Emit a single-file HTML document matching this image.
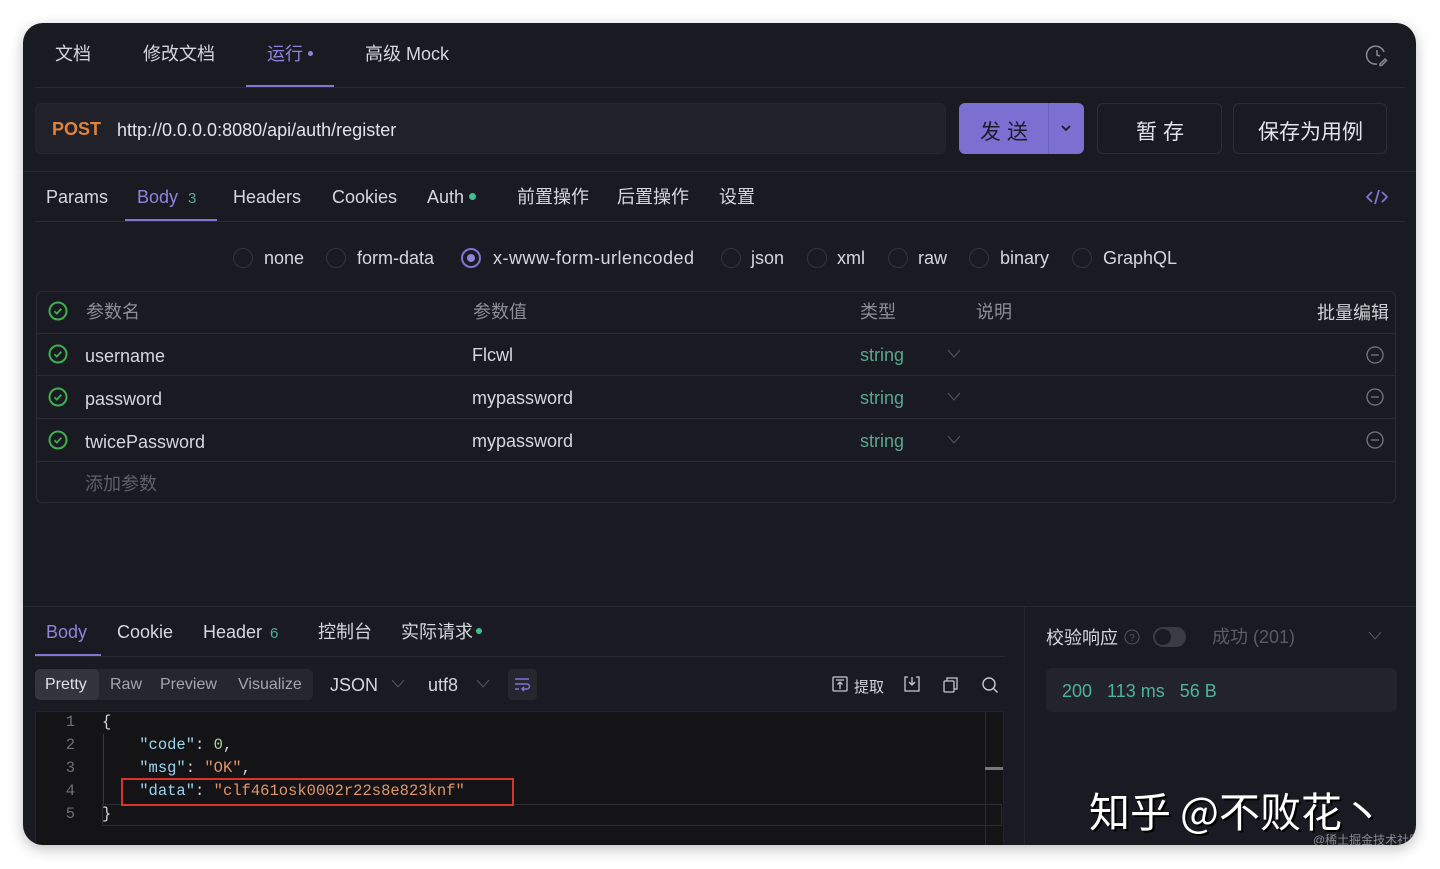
<!DOCTYPE html>
<html><head><meta charset="utf-8"><style>
*{margin:0;padding:0;box-sizing:border-box}
body{width:1440px;height:869px;background:#fff;position:relative;overflow:hidden;font-family:"Liberation Sans","Noto Sans CJK SC",sans-serif;color:#d6d7dc}
.win{position:absolute;left:23px;top:23px;width:1393px;height:822px;background:#1a1b22;border-radius:20px;box-shadow:0 4px 14px rgba(0,0,0,.25);overflow:hidden}
.a{position:absolute;white-space:nowrap}
.t{font-size:18px;line-height:22px}
.hl{position:absolute;height:1px;background:#2a2b33}
.pur{color:#8e84dc}
.dot{display:inline-block;width:6px;height:6px;border-radius:50%;margin-left:5px;vertical-align:middle;position:relative;top:-2px}
.radio{position:absolute;width:20px;height:20px;border:1.5px solid #33343c;border-radius:50%}
.mono{font-family:"Liberation Mono","DejaVu Sans Mono",monospace;font-size:15.5px;line-height:23px}
</style></head><body>
<div class="win">
<div class="a t" style="left:32px;top:20px">文档</div>
<div class="a t" style="left:120px;top:20px">修改文档</div>
<div class="a t pur" style="left:244px;top:20px">运行<span class="dot" style="background:#8e84dc;width:5px;height:5px"></span></div>
<div class="a t" style="left:342px;top:20px">高级 Mock</div>
<div class="a" style="left:223px;top:62px;width:88px;height:2px;background:#8078d0"></div>
<div class="hl" style="left:12px;top:64px;width:1370px"></div>
<svg class="a" style="left:1342px;top:20px" width="24" height="24" viewBox="0 0 24 24" fill="none" stroke="#8a8b93" stroke-width="1.5"><path d="M19 9A9 9 0 1 0 12 21"/><path d="M12 7v5l3 1"/><path d="M15 21l5-5 1.5 1.5-5 5H15z"/></svg>
<div class="a" style="left:12px;top:80px;width:911px;height:51px;background:#212229;border-radius:6px;border:1px solid #25262d"></div>
<div class="a t" style="left:29px;top:95px;color:#e0833d;font-weight:bold">POST</div>
<div class="a t" style="left:94px;top:96px;color:#e2e3e8">http://0.0.0.0:8080/api/auth/register</div>
<div class="a" style="left:936px;top:80px;width:125px;height:51px;background:#7b70d2;border-radius:6px"></div>
<div class="a" style="left:1025px;top:80px;width:1px;height:51px;background:#6c62bf"></div>
<div class="a" style="left:957px;top:93px;font-size:21px;color:#1c1c28;letter-spacing:6px">发送</div>
<svg class="a" style="left:1037px;top:100px" width="12" height="10"><path d="M2 3l4 4 4-4" stroke="#1c1c28" stroke-width="1.8" fill="none"/></svg>
<div class="a" style="left:1074px;top:80px;width:125px;height:51px;border:1px solid #2c2d35;border-radius:6px"></div>
<div class="a" style="left:1113px;top:93px;font-size:21px;color:#e2e3e8;letter-spacing:6px">暂存</div>
<div class="a" style="left:1210px;top:80px;width:154px;height:51px;border:1px solid #2c2d35;border-radius:6px"></div>
<div class="a" style="left:1235px;top:93px;font-size:21px;color:#e2e3e8">保存为用例</div>
<div class="hl" style="left:0;top:148px;width:1393px"></div>
<div class="a t" style="left:23px;top:163px">Params</div>
<div class="a t pur" style="left:114px;top:163px">Body <span style="font-size:15px;color:#4fae95;margin-left:5px">3</span></div>
<div class="a t" style="left:210px;top:163px">Headers</div>
<div class="a t" style="left:309px;top:163px">Cookies</div>
<div class="a t" style="left:404px;top:163px">Auth<span class="dot" style="background:#41c08e;width:7px;height:7px"></span></div>
<div class="a t" style="left:494px;top:163px">前置操作</div>
<div class="a t" style="left:594px;top:163px">后置操作</div>
<div class="a t" style="left:696px;top:163px">设置</div>
<svg class="a" style="left:1343px;top:166px" width="22" height="16" fill="none" stroke="#7d74d6" stroke-width="1.8"><path d="M6 3L1 8l5 5M16 3l5 5-5 5M13 1L9 15"/></svg>
<div class="a" style="left:102px;top:196px;width:92px;height:3px;background:#8078d0"></div>
<div class="hl" style="left:12px;top:198px;width:1370px"></div>
<div class="radio" style="left:210px;top:225px"></div><div class="a t" style="left:241px;top:224px">none</div>
<div class="radio" style="left:303px;top:225px"></div><div class="a t" style="left:334px;top:224px">form-data</div>
<div class="radio" style="left:438px;top:225px;border-color:#7d74d6;border-width:2px"><div style="position:absolute;left:4px;top:4px;width:8px;height:8px;border-radius:50%;background:#8e84dc"></div></div><div class="a t" style="left:470px;top:224px;letter-spacing:0.5px">x-www-form-urlencoded</div>
<div class="radio" style="left:698px;top:225px"></div><div class="a t" style="left:728px;top:224px">json</div>
<div class="radio" style="left:784px;top:225px"></div><div class="a t" style="left:814px;top:224px">xml</div>
<div class="radio" style="left:865px;top:225px"></div><div class="a t" style="left:895px;top:224px">raw</div>
<div class="radio" style="left:946px;top:225px"></div><div class="a t" style="left:977px;top:224px">binary</div>
<div class="radio" style="left:1049px;top:225px"></div><div class="a t" style="left:1080px;top:224px">GraphQL</div>
<div class="a" style="left:13px;top:268px;width:1360px;height:212px;border:1px solid #2a2b33;border-radius:6px"></div>
<div class="hl" style="left:14px;top:310px;width:1358px"></div>
<div class="hl" style="left:14px;top:352px;width:1358px"></div>
<div class="hl" style="left:14px;top:395px;width:1358px"></div>
<div class="hl" style="left:14px;top:438px;width:1358px"></div>
<svg class="a" style="left:25px;top:278px" width="20" height="20"><circle cx="10" cy="10" r="8.5" stroke="#3fae4f" stroke-width="2" fill="none"/><path d="M6.5 10.3l2.3 2.3 4.5-4.8" stroke="#3fae4f" stroke-width="1.8" fill="none"/></svg>
<svg class="a" style="left:25px;top:321px" width="20" height="20"><circle cx="10" cy="10" r="8.5" stroke="#3fae4f" stroke-width="2" fill="none"/><path d="M6.5 10.3l2.3 2.3 4.5-4.8" stroke="#3fae4f" stroke-width="1.8" fill="none"/></svg>
<svg class="a" style="left:25px;top:364px" width="20" height="20"><circle cx="10" cy="10" r="8.5" stroke="#3fae4f" stroke-width="2" fill="none"/><path d="M6.5 10.3l2.3 2.3 4.5-4.8" stroke="#3fae4f" stroke-width="1.8" fill="none"/></svg>
<svg class="a" style="left:25px;top:407px" width="20" height="20"><circle cx="10" cy="10" r="8.5" stroke="#3fae4f" stroke-width="2" fill="none"/><path d="M6.5 10.3l2.3 2.3 4.5-4.8" stroke="#3fae4f" stroke-width="1.8" fill="none"/></svg>
<div class="a t" style="left:63px;top:278px;color:#8c8d95">参数名</div>
<div class="a t" style="left:450px;top:278px;color:#8c8d95">参数值</div>
<div class="a t" style="left:837px;top:278px;color:#8c8d95">类型</div>
<div class="a t" style="left:953px;top:278px;color:#8c8d95">说明</div>
<div class="a t" style="left:1294px;top:279px;color:#d0d1d6">批量编辑</div>
<div class="a t" style="left:62px;top:322px">username</div><div class="a t" style="left:449px;top:321px">Flcwl</div>
<div class="a t" style="left:62px;top:365px">password</div><div class="a t" style="left:449px;top:364px">mypassword</div>
<div class="a t" style="left:62px;top:408px">twicePassword</div><div class="a t" style="left:449px;top:407px">mypassword</div>
<div class="a t" style="left:837px;top:321px;color:#5aa68d">string</div>
<div class="a t" style="left:837px;top:364px;color:#5aa68d">string</div>
<div class="a t" style="left:837px;top:407px;color:#5aa68d">string</div>
<svg class="a" style="left:924px;top:326px" width="14" height="10"><path d="M1 1l6 7 6-7" stroke="#55565e" fill="none"/></svg>
<svg class="a" style="left:924px;top:369px" width="14" height="10"><path d="M1 1l6 7 6-7" stroke="#55565e" fill="none"/></svg>
<svg class="a" style="left:924px;top:412px" width="14" height="10"><path d="M1 1l6 7 6-7" stroke="#55565e" fill="none"/></svg>
<svg class="a" style="left:1342px;top:322px" width="20" height="20"><circle cx="10" cy="10" r="8" stroke="#77787f" stroke-width="1.3" fill="none"/><path d="M6 10h8" stroke="#77787f" stroke-width="1.3"/></svg>
<svg class="a" style="left:1342px;top:364px" width="20" height="20"><circle cx="10" cy="10" r="8" stroke="#77787f" stroke-width="1.3" fill="none"/><path d="M6 10h8" stroke="#77787f" stroke-width="1.3"/></svg>
<svg class="a" style="left:1342px;top:407px" width="20" height="20"><circle cx="10" cy="10" r="8" stroke="#77787f" stroke-width="1.3" fill="none"/><path d="M6 10h8" stroke="#77787f" stroke-width="1.3"/></svg>
<div class="a t" style="left:62px;top:450px;color:#5e5f67">添加参数</div>
<div class="hl" style="left:0;top:583px;width:1393px"></div>
<div class="a" style="left:1001px;top:584px;width:1px;height:240px;background:#25262d"></div>
<div class="a t" style="left:23px;top:598px;color:#8e84dc">Body</div>
<div class="a t" style="left:94px;top:598px">Cookie</div>
<div class="a t" style="left:180px;top:598px">Header <span style="font-size:15px;color:#4fae95;margin-left:3px">6</span></div>
<div class="a t" style="left:295px;top:598px">控制台</div>
<div class="a t" style="left:378px;top:598px">实际请求<span class="dot" style="background:#41c08e;margin-left:3px"></span></div>
<div class="a" style="left:12px;top:631px;width:66px;height:3px;background:#8078d0"></div>
<div class="hl" style="left:12px;top:633px;width:970px"></div>
<div class="a" style="left:12px;top:646px;width:278px;height:31px;background:#25262e;border-radius:5px"></div>
<div class="a" style="left:12px;top:646px;width:64px;height:31px;background:#33343e;border-radius:5px"></div>
<div class="a" style="left:22px;top:653px;font-size:16px;color:#e0e1e6">Pretty</div>
<div class="a" style="left:87px;top:653px;font-size:16px;color:#a5a6ad">Raw</div>
<div class="a" style="left:137px;top:653px;font-size:16px;color:#a5a6ad">Preview</div>
<div class="a" style="left:215px;top:653px;font-size:16px;color:#a5a6ad">Visualize</div>
<div class="a t" style="left:307px;top:651px">JSON</div>
<svg class="a" style="left:368px;top:656px" width="14" height="10"><path d="M1 1l6 7 6-7" stroke="#55565e" fill="none"/></svg>
<div class="a t" style="left:405px;top:651px">utf8</div>
<svg class="a" style="left:453px;top:656px" width="14" height="10"><path d="M1 1l6 7 6-7" stroke="#55565e" fill="none"/></svg>
<div class="a" style="left:485px;top:646px;width:29px;height:31px;background:#25262e;border-radius:4px"></div>
<svg class="a" style="left:490px;top:652px" width="18" height="18" fill="none" stroke="#7d74d6" stroke-width="1.5"><path d="M2 4h14M2 9h12a2.5 2.5 0 0 1 0 5H9M11 12l-2 2 2 2M2 14h4"/></svg>
<svg class="a" style="left:809px;top:653px" width="16" height="16" fill="none" stroke="#c8c9ce" stroke-width="1.3"><rect x="1" y="1" width="14" height="14" rx="1"/><path d="M4 4h8M8 13V6M5.5 8.5L8 6l2.5 2.5"/></svg>
<div class="a" style="left:831px;top:653px;font-size:15px;color:#d6d7dc">提取</div>
<svg class="a" style="left:880px;top:652px" width="18" height="18" fill="none" stroke="#c8c9ce" stroke-width="1.3"><path d="M5 2H2v14h14V2h-3M9 2v8M6 7l3 3 3-3"/></svg>
<svg class="a" style="left:919px;top:653px" width="18" height="18" fill="none" stroke="#c8c9ce" stroke-width="1.3"><rect x="2" y="5" width="10" height="11" rx="1"/><path d="M5 5V2h10v11h-3"/></svg>
<svg class="a" style="left:958px;top:653px" width="18" height="18" fill="none" stroke="#c8c9ce" stroke-width="1.4"><circle cx="8" cy="8" r="6"/><path d="M12.5 12.5l4 4"/></svg>
<div class="a" style="left:12px;top:688px;width:969px;height:140px;background:#141417;border:1px solid #22232a"></div>
<div class="a" style="left:962px;top:689px;width:1px;height:140px;background:#2a2b33"></div>
<div class="a" style="left:962px;top:744px;width:18px;height:3px;background:#77787f"></div>
<div class="a" style="left:79px;top:781px;width:900px;height:22px;border:1px solid #2c2d33"></div>
<div class="a" style="left:80px;top:711px;width:1px;height:70px;background:#3a3b42"></div>
<div class="a mono" style="left:40px;top:688px;color:#6e6f76;text-align:right;width:12px">1<br>2<br>3<br>4<br>5</div>
<div class="a mono" style="left:79px;top:688px;color:#d6d7dc">{<br>&nbsp;&nbsp;&nbsp;&nbsp;<span style="color:#9cd4f0">"code"</span>: <span style="color:#b6d49a">0</span>,<br>&nbsp;&nbsp;&nbsp;&nbsp;<span style="color:#9cd4f0">"msg"</span>: <span style="color:#e0956b">"OK"</span>,<br>&nbsp;&nbsp;&nbsp;&nbsp;<span style="color:#9cd4f0">"data"</span>: <span style="color:#e0956b">"clf461osk0002r22s8e823knf"</span><br>}</div>
<div class="a" style="left:98px;top:755px;width:393px;height:28px;border:2px solid #d8352a"></div>
<div class="a t" style="left:1023px;top:604px;color:#d6d7dc">校验响应</div>
<svg class="a" style="left:1101px;top:606px" width="16" height="16"><circle cx="8" cy="8" r="7" stroke="#55565e" fill="none"/><text x="8" y="12" font-size="10" fill="#55565e" text-anchor="middle" font-family="Liberation Sans">?</text></svg>
<div class="a" style="left:1130px;top:604px;width:33px;height:20px;border-radius:10px;background:#3a3b44"></div>
<div class="a" style="left:1132px;top:606px;width:16px;height:16px;border-radius:50%;background:#1a1b22"></div>
<div class="a t" style="left:1189px;top:603px;color:#5a5b63">成功 (201)</div>
<svg class="a" style="left:1345px;top:608px" width="14" height="10"><path d="M1 1l6 7 6-7" stroke="#55565e" fill="none"/></svg>
<div class="a" style="left:1023px;top:645px;width:351px;height:44px;background:#22232b;border-radius:6px"></div>
<div class="a t" style="left:1039px;top:657px;color:#4fb39a">200 &nbsp;&nbsp;113 ms &nbsp;&nbsp;56 B</div>
<div class="a" style="left:1066px;top:756px;font-size:41px;font-weight:normal;color:#fff;text-shadow:2px 2px 0 #000;font-family:'Noto Sans CJK SC',sans-serif">知乎 @不败花丶</div>
<div class="a" style="left:1290px;top:808px;font-size:12px;color:#8a8b90">@稀土掘金技术社区</div>
</div>
</body></html>
